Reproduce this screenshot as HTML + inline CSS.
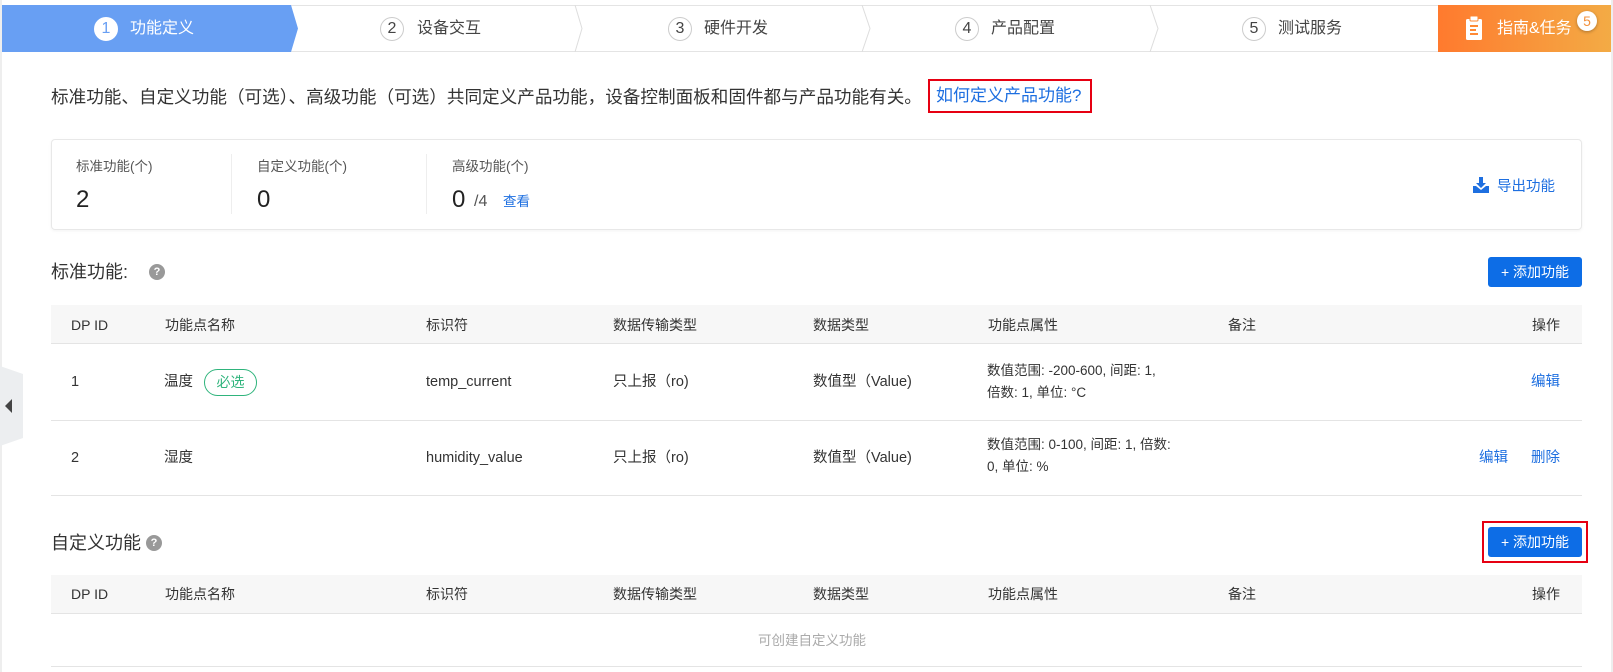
<!DOCTYPE html>
<html><head><meta charset="utf-8"><style>
*{margin:0;padding:0;box-sizing:border-box}
body{width:1613px;height:672px;overflow:hidden;background:#fff;font-family:"Liberation Sans","Noto Sans CJK SC",sans-serif;color:#333;position:relative}
.a{position:absolute;white-space:nowrap}
.circ{position:absolute;width:24px;height:24px;border-radius:50%;border:1px solid #ccc;text-align:center;line-height:22px;font-size:16px;color:#444;background:#fff}
.st{font-size:16px;color:#444}
.th{font-size:14px;color:#333}
.td{font-size:14.5px;color:#333}
.blue{color:#1e6fe0}
.btn{position:absolute;left:1488px;width:94px;height:30px;background:#0d6de6;border-radius:3px;color:#fff;font-size:14px;text-align:center;line-height:30px}
.hl{position:absolute;left:51px;width:1531px;height:1px;background:#e4e4e4}
.hdr{position:absolute;left:51px;width:1531px;background:#f7f7f7}
.q{position:absolute;width:16px;height:16px;border-radius:50%;background:#999;color:#fff;font-size:11px;text-align:center;line-height:16px;font-weight:bold}
</style></head><body>
<div style="position:absolute;left:0;top:0;width:2px;height:672px;background:#eee"></div>
<div style="position:absolute;left:1611px;top:0;width:2px;height:672px;background:#eee"></div>
<div style="position:absolute;left:2px;top:5px;width:1436px;height:47px;border-top:1px solid #e4e4e4;border-bottom:1px solid #e4e4e4"></div>
<svg style="position:absolute;left:0;top:5px" width="1440" height="47">
<polygon points="2,0 291,0 298,23.5 291,47 2,47" fill="#689ff3"/>
<polyline points="575,0 582,23.5 575,47" fill="none" stroke="#ddd"/>
<polyline points="862,0 870,23.5 862,47" fill="none" stroke="#ddd"/>
<polyline points="1150,0 1158,23.5 1150,47" fill="none" stroke="#ddd"/>
</svg>
<div class="circ" style="left:94px;top:17px;border-color:#fff;color:#689ff3">1</div>
<div class="a st" style="left:130px;top:17px;color:#fff;line-height:24px">功能定义</div>
<div class="circ" style="left:380px;top:17px">2</div>
<div class="a st" style="left:417px;top:17px;line-height:24px">设备交互</div>
<div class="circ" style="left:668px;top:17px">3</div>
<div class="a st" style="left:704px;top:17px;line-height:24px">硬件开发</div>
<div class="circ" style="left:955px;top:17px">4</div>
<div class="a st" style="left:991px;top:17px;line-height:24px">产品配置</div>
<div class="circ" style="left:1242px;top:17px">5</div>
<div class="a st" style="left:1278px;top:17px;line-height:24px">测试服务</div>
<div style="position:absolute;left:1438px;top:5px;width:173px;height:47px;background:linear-gradient(90deg,#ff7a2e,#f3ab45)"></div>
<svg style="position:absolute;left:1466px;top:16px" width="16" height="24"><rect x="0" y="3" width="16" height="21" rx="1.5" fill="#fff"/><rect x="4" y="0" width="8" height="5" rx="1" fill="#fff" stroke="#ff8a35" stroke-width="1"/><rect x="4" y="9" width="8" height="2" fill="#ff8a35"/><rect x="4" y="13" width="6" height="2" fill="#ff8a35"/><rect x="4" y="17" width="8" height="2" fill="#ff8a35"/></svg>
<div class="a" style="left:1497px;top:17px;font-size:16px;color:#fff;line-height:24px">指南&amp;任务</div>
<div style="position:absolute;left:1577px;top:11px;width:20px;height:20px;border-radius:50%;background:#fff;color:#f3913c;font-size:14px;text-align:center;line-height:20px;box-shadow:0 1px 3px rgba(0,0,0,.3)">5</div>
<div class="a" style="left:51px;top:85px;font-size:17.6px;line-height:24px;color:#333">标准功能、自定义功能（可选）、高级功能（可选）共同定义产品功能，设备控制面板和固件都与产品功能有关。</div>
<div style="position:absolute;left:928px;top:79px;width:164px;height:34px;border:2px solid #e60012"></div>
<div class="a blue" style="left:936px;top:84px;font-size:17px;line-height:24px">如何定义产品功能?</div>
<div style="position:absolute;left:51px;top:139px;width:1531px;height:91px;border:1px solid #e8e8e8;border-radius:4px;box-shadow:0 1px 3px rgba(0,0,0,.05)"></div>
<div style="position:absolute;left:231px;top:154px;width:1px;height:60px;background:#eee"></div>
<div style="position:absolute;left:426px;top:154px;width:1px;height:60px;background:#eee"></div>
<div class="a" style="left:76px;top:158px;font-size:13.5px;color:#555;line-height:18px">标准功能(个)</div>
<div class="a" style="left:257px;top:158px;font-size:13.5px;color:#555;line-height:18px">自定义功能(个)</div>
<div class="a" style="left:452px;top:158px;font-size:13.5px;color:#555;line-height:18px">高级功能(个)</div>
<div class="a" style="left:76px;top:186px;font-size:24px;color:#222;line-height:28px">2</div>
<div class="a" style="left:257px;top:186px;font-size:24px;color:#222;line-height:28px">0</div>
<div class="a" style="left:452px;top:186px;font-size:24px;color:#222;line-height:28px">0</div>
<div class="a" style="left:474px;top:192px;font-size:16px;color:#555;line-height:20px">/4</div>
<div class="a blue" style="left:503px;top:193px;font-size:13.5px;line-height:18px">查看</div>
<svg style="position:absolute;left:1473px;top:177px" width="16" height="16"><path d="M6 0h4v6h3l-5 5-5-5h3z" fill="#1e6fe0"/><path d="M0 9h3l5 4 5-4h3v7H0z" fill="#1e6fe0"/></svg>
<div class="a blue" style="left:1497px;top:177px;font-size:14.5px;line-height:20px">导出功能</div>
<div class="a" style="left:51px;top:261px;font-size:18px;line-height:22px">标准功能:</div>
<div class="q" style="left:149px;top:264px">?</div>
<div class="btn" style="top:257px">+ 添加功能</div>
<div class="hdr" style="top:305px;height:39px"></div>
<div class="hl" style="top:343px"></div>
<div class="hl" style="top:420px"></div>
<div class="hl" style="top:495px"></div>
<div class="a th" style="left:71px;top:315px;line-height:20px">DP ID</div>
<div class="a th" style="left:165px;top:315px;line-height:20px">功能点名称</div>
<div class="a th" style="left:426px;top:315px;line-height:20px">标识符</div>
<div class="a th" style="left:613px;top:315px;line-height:20px">数据传输类型</div>
<div class="a th" style="left:813px;top:315px;line-height:20px">数据类型</div>
<div class="a th" style="left:988px;top:315px;line-height:20px">功能点属性</div>
<div class="a th" style="left:1228px;top:315px;line-height:20px">备注</div>
<div class="a th" style="left:1532px;top:315px;line-height:20px">操作</div>
<div class="a td" style="left:71px;top:372px;line-height:20px">1</div>
<div class="a td" style="left:164px;top:372px;line-height:20px">温度</div>
<div style="position:absolute;left:204px;top:369px;width:53px;height:27px;border:1px solid #2fb47c;border-radius:14px;color:#2fb47c;font-size:14px;text-align:center;line-height:25px">必选</div>
<div class="a td" style="left:426px;top:372px;line-height:20px">temp_current</div>
<div class="a td" style="left:613px;top:372px;line-height:20px">只上报（ro)</div>
<div class="a td" style="left:813px;top:372px;line-height:20px">数值型（Value)</div>
<div class="a" style="left:987px;top:360px;font-size:13.5px;line-height:22px">数值范围: -200-600, 间距: 1,<br>倍数: 1, 单位: °C</div>
<div class="a td blue" style="left:1531px;top:372px;line-height:20px">编辑</div>
<div class="a td" style="left:71px;top:448px;line-height:20px">2</div>
<div class="a td" style="left:164px;top:448px;line-height:20px">湿度</div>
<div class="a td" style="left:426px;top:448px;line-height:20px">humidity_value</div>
<div class="a td" style="left:613px;top:448px;line-height:20px">只上报（ro)</div>
<div class="a td" style="left:813px;top:448px;line-height:20px">数值型（Value)</div>
<div class="a" style="left:987px;top:434px;font-size:13.5px;line-height:22px">数值范围: 0-100, 间距: 1, 倍数:<br>0, 单位: %</div>
<div class="a td blue" style="left:1479px;top:448px;line-height:20px">编辑</div>
<div class="a td blue" style="left:1531px;top:448px;line-height:20px">删除</div>
<svg style="position:absolute;left:0;top:366px" width="24" height="80"><polygon points="0,0 23,8 23,72 0,80" fill="#eceef0"/><polygon points="5,40 12,33 12,47" fill="#444"/></svg>
<div class="a" style="left:51px;top:532px;font-size:18px;line-height:22px">自定义功能</div>
<div class="q" style="left:146px;top:535px">?</div>
<div style="position:absolute;left:1482px;top:521px;width:106px;height:42px;border:2px solid #e60012"></div>
<div class="btn" style="top:527px">+ 添加功能</div>
<div class="hdr" style="top:575px;height:38px"></div>
<div class="hl" style="top:613px"></div>
<div class="hl" style="top:666px"></div>
<div class="a th" style="left:71px;top:584px;line-height:20px">DP ID</div>
<div class="a th" style="left:165px;top:584px;line-height:20px">功能点名称</div>
<div class="a th" style="left:426px;top:584px;line-height:20px">标识符</div>
<div class="a th" style="left:613px;top:584px;line-height:20px">数据传输类型</div>
<div class="a th" style="left:813px;top:584px;line-height:20px">数据类型</div>
<div class="a th" style="left:988px;top:584px;line-height:20px">功能点属性</div>
<div class="a th" style="left:1228px;top:584px;line-height:20px">备注</div>
<div class="a th" style="left:1532px;top:584px;line-height:20px">操作</div>
<div class="a" style="left:758px;top:632px;font-size:13.5px;color:#aaa;line-height:18px">可创建自定义功能</div>
</body></html>
